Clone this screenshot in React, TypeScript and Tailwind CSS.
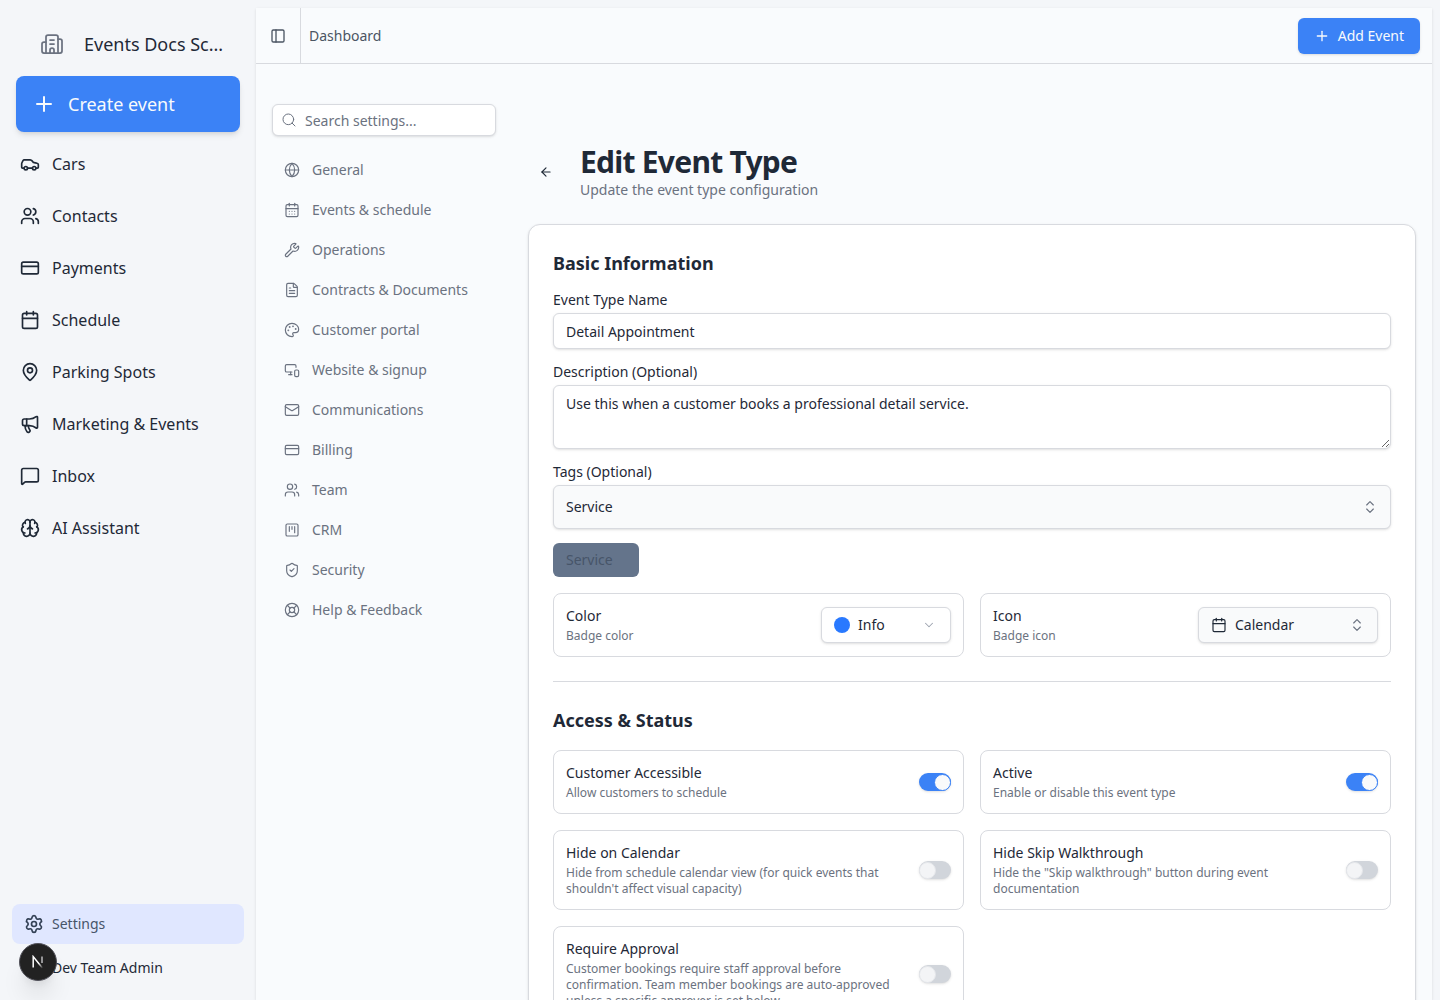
import React from "react";
import {
  Building2, Plus, Car, Users, CreditCard, Calendar, MapPin, Megaphone, MessageSquare, Brain, Settings,
  PanelLeft, Search, Globe, CalendarDays, Wrench, FileText, Palette, MonitorSmartphone, Mail, SquareKanban,
  ShieldCheck, LifeBuoy, ArrowLeft, ChevronsUpDown, ChevronDown,
} from "lucide-react";

const mainNav = [
  { label: "Cars", Icon: Car },
  { label: "Contacts", Icon: Users },
  { label: "Payments", Icon: CreditCard },
  { label: "Schedule", Icon: Calendar },
  { label: "Parking Spots", Icon: MapPin },
  { label: "Marketing & Events", Icon: Megaphone },
  { label: "Inbox", Icon: MessageSquare },
  { label: "AI Assistant", Icon: Brain },
];

const settingsNav = [
  { label: "General", Icon: Globe },
  { label: "Events & schedule", Icon: CalendarDays },
  { label: "Operations", Icon: Wrench },
  { label: "Contracts & Documents", Icon: FileText },
  { label: "Customer portal", Icon: Palette },
  { label: "Website & signup", Icon: MonitorSmartphone },
  { label: "Communications", Icon: Mail },
  { label: "Billing", Icon: CreditCard },
  { label: "Team", Icon: Users },
  { label: "CRM", Icon: SquareKanban },
  { label: "Security", Icon: ShieldCheck },
  { label: "Help & Feedback", Icon: LifeBuoy },
];

function Toggle({ on }: { on: boolean }) {
  return (
    <div
      className={
        on
          ? "flex h-[18px] w-8 shrink-0 items-center justify-end rounded-full bg-[#3b82f6] shadow-sm"
          : "flex h-[18px] w-8 shrink-0 items-center justify-start rounded-full bg-[#d1d5db] shadow-sm"
      }
    >
      <div
        className={
          on
            ? "h-[17px] w-[17px] rounded-full border border-[#3b82f6] bg-[#f9fafb]"
            : "h-[17px] w-[17px] rounded-full border border-[#e5e7eb] bg-[#f3f4f6]"
        }
      />
    </div>
  );
}

function OptionCard({ title, desc, on }: { title: string; desc: string; on: boolean }) {
  return (
    <div className="flex items-center justify-between gap-6 rounded-lg border border-[#d8dadf] bg-white p-3">
      <div className="min-w-0">
        <div className="mb-[2px] text-sm leading-5 text-[#1f2937]">{title}</div>
        <div className="text-xs leading-4 text-[#6b7280]">{desc}</div>
      </div>
      <Toggle on={on} />
    </div>
  );
}

function Label({ children }: { children: React.ReactNode }) {
  return <div className="mb-[3px] text-sm leading-5 text-[#1f2937]">{children}</div>;
}

export default function App() {
  return (
    <div
      className="flex h-screen overflow-hidden bg-[#f4f6f9] text-[#1f2937]"
      style={{ fontFamily: '"Noto Sans", sans-serif' }}
    >
      <aside className="relative flex w-[256px] shrink-0 flex-col">
        <div className="flex h-[76px] items-center pl-[40px] pt-[12px]">
          <Building2 size={24} strokeWidth={1.75} className="text-[#6b7280]" />
          <span className="ml-[20px] text-lg text-[#1f2937]">Events Docs Sc...</span>
        </div>
        <div className="px-4">
          <div className="flex h-14 items-center gap-3 rounded-lg bg-[#3b82f6] pl-4 text-lg text-[#f8fafc] shadow-md">
            <Plus size={24} strokeWidth={2} />
            <span>Create event</span>
          </div>
        </div>
        <nav className="mt-[6px] flex flex-col">
          {mainNav.map(({ label, Icon }) => (
            <div key={label} className="flex h-[52px] items-center gap-3 pl-5 text-base text-[#1f2937]">
              <Icon size={20} strokeWidth={2} className="text-[#1f2937]" />
              <span>{label}</span>
            </div>
          ))}
        </nav>
        <div className="mt-auto px-3 pb-[10px]">
          <div className="flex h-10 items-center gap-2 rounded-lg bg-[#e0e7ff] pl-3 text-sm text-[#475569]">
            <Settings size={20} strokeWidth={2} className="text-[#334155]" />
            <span>Settings</span>
          </div>
          <div className="flex h-[46px] items-center pl-10 pt-[2px] text-sm text-[#1f2937]">Dev Team Admin</div>
        </div>
        <div className="absolute bottom-[19px] left-[19px] flex h-[38px] w-[38px] items-center justify-center rounded-full border border-[#52525b] bg-[#222] shadow-xl">
          <svg width="14" height="14" viewBox="0 0 14 14" fill="none">
            <defs>
              <linearGradient id="nFade" x1="4" y1="2" x2="12" y2="13" gradientUnits="userSpaceOnUse">
                <stop offset="0.55" stopColor="#ffffff" />
                <stop offset="1" stopColor="#ffffff" stopOpacity="0" />
              </linearGradient>
            </defs>
            <path d="M2.2 12.6V1.6L11.4 13" stroke="url(#nFade)" strokeWidth="1.5" />
            <path d="M11 1.6V8" stroke="#d4d4d8" strokeWidth="1.3" />
          </svg>
        </div>
      </aside>

      <main className="mr-2 mt-2 flex min-w-0 flex-1 flex-col overflow-hidden bg-[#f9fbfd] shadow-sm">
        <header className="flex h-14 shrink-0 items-center border-b border-[#d8dadf]">
          <div className="flex h-full w-[45px] items-center justify-center border-r border-[#d8dadf]">
            <PanelLeft size={16} strokeWidth={2} className="text-[#4b5563]" />
          </div>
          <span className="ml-2 text-sm text-[#4b5563]">Dashboard</span>
          <div className="ml-auto mr-3 flex h-9 items-center gap-2 rounded-md bg-[#3b82f6] px-4 text-sm text-[#f8fafc] shadow-sm">
            <Plus size={16} />
            <span>Add Event</span>
          </div>
        </header>

        <div className="flex min-h-0 flex-1">
          <div className="w-[272px] shrink-0 pl-4 pr-8 pt-10">
            <div className="mb-[14px] flex h-8 items-center gap-2 rounded-md border border-[#d8dadf] bg-white pl-2 text-sm text-[#6b7280] shadow-sm">
              <Search size={16} strokeWidth={1.5} className="text-[#6b7280]" />
              <span className="pt-[2px]">Search settings...</span>
            </div>
            <nav className="flex flex-col">
              {settingsNav.map(({ label, Icon }) => (
                <div key={label} className="flex h-10 items-center gap-3 pl-3 text-sm text-[#6b7280]">
                  <Icon size={16} strokeWidth={1.75} />
                  <span>{label}</span>
                </div>
              ))}
            </nav>
          </div>

          <div className="min-w-0 flex-1 pr-4 pt-[80px]">
            <div className="mb-6 flex items-center">
              <ArrowLeft size={14} strokeWidth={2} className="ml-[11px] text-[#1f2937]" />
              <div className="ml-[27px]">
                <h1 className="text-[30px] font-bold leading-9 tracking-tight text-[#1f2937]">Edit Event Type</h1>
                <p className="text-sm leading-[20px] text-[#6b7280]">Update the event type configuration</p>
              </div>
            </div>

            <section className="rounded-xl border border-[#d8dadf] bg-white px-6 pt-6 shadow-sm">
              <h2 className="mb-[13px] text-lg font-bold leading-7 text-[#1f2937]">Basic Information</h2>

              <Label>Event Type Name</Label>
              <input
                readOnly
                value="Detail Appointment"
                className="mb-[13px] block h-9 w-full rounded-md border border-[#d8dadf] bg-white px-3 text-sm text-[#1f2937] shadow-sm outline-none"
              />

              <Label>Description (Optional)</Label>
              <textarea
                readOnly
                value="Use this when a customer books a professional detail service."
                className="mb-[13px] block h-16 w-full rounded-md border border-[#d8dadf] bg-white px-3 py-2 text-sm text-[#1f2937] shadow-sm outline-none"
              />

              <Label>Tags (Optional)</Label>
              <div className="mb-[14px] flex h-11 items-center justify-between rounded-md border border-[#d8dadf] bg-[#f9fafb] pl-3 pr-[12px] text-sm text-[#1f2937] shadow-sm">
                <span>Service</span>
                <ChevronsUpDown size={16} strokeWidth={1.75} className="text-[#6b7280]" />
              </div>

              <div className="mb-4 flex h-[34px] w-[86px] items-center rounded-md bg-[#64748b] pl-[13px] text-sm text-[#475569]">
                Service
              </div>

              <div className="grid grid-cols-2 gap-4">
                <div className="flex h-16 items-center justify-between rounded-lg border border-[#d8dadf] px-3">
                  <div>
                    <div className="mb-[2px] text-sm leading-5 text-[#1f2937]">Color</div>
                    <div className="text-xs leading-4 text-[#6b7280]">Badge color</div>
                  </div>
                  <div className="flex h-9 w-[130px] items-center rounded-md border border-[#d8dadf] bg-white pl-3 pr-[14px] text-sm text-[#1f2937] shadow-sm">
                    <span className="h-4 w-4 rounded-full bg-[#2979ff]" />
                    <span className="ml-2">Info</span>
                    <ChevronDown size={14} strokeWidth={1.75} className="ml-auto text-[#9ca3af]" />
                  </div>
                </div>
                <div className="flex h-16 items-center justify-between rounded-lg border border-[#d8dadf] px-3">
                  <div>
                    <div className="mb-[2px] text-sm leading-5 text-[#1f2937]">Icon</div>
                    <div className="text-xs leading-4 text-[#6b7280]">Badge icon</div>
                  </div>
                  <div className="flex h-9 w-[180px] items-center rounded-md border border-[#d8dadf] bg-[#f9fafb] pl-3 pr-3 text-sm text-[#1f2937] shadow-sm">
                    <Calendar size={16} strokeWidth={1.75} />
                    <span className="ml-2">Calendar</span>
                    <ChevronsUpDown size={16} strokeWidth={1.75} className="ml-auto text-[#6b7280]" />
                  </div>
                </div>
              </div>

              <div className="my-6 border-t border-[#d8dadf]" />

              <h2 className="mb-4 text-lg font-bold leading-7 text-[#1f2937]">Access &amp; Status</h2>

              <div className="grid grid-cols-2 items-start gap-4">
                <OptionCard title="Customer Accessible" desc="Allow customers to schedule" on />
                <OptionCard title="Active" desc="Enable or disable this event type" on />
                <OptionCard
                  title="Hide on Calendar"
                  desc="Hide from schedule calendar view (for quick events that shouldn't affect visual capacity)"
                  on={false}
                />
                <OptionCard
                  title="Hide Skip Walkthrough"
                  desc={'Hide the "Skip walkthrough" button during event documentation'}
                  on={false}
                />
                <OptionCard
                  title="Require Approval"
                  desc="Customer bookings require staff approval before confirmation. Team member bookings are auto-approved unless a specific approver is set below."
                  on={false}
                />
              </div>
              <div className="h-6" />
            </section>
          </div>
        </div>
      </main>
    </div>
  );
}
